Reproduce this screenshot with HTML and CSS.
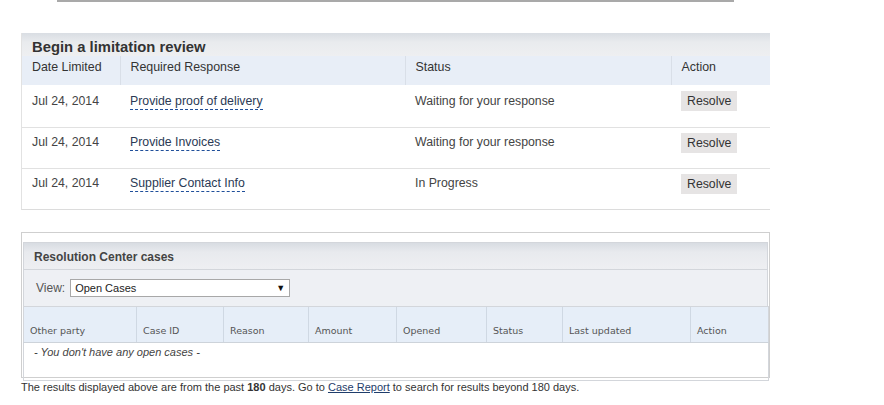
FILE: index.html
```html
<!DOCTYPE html>
<html>
<head>
<meta charset="utf-8">
<link rel="stylesheet" href="styles.css">
</head>
<body>
<div class="page">
  <div class="topline"></div>

  <section class="review">
    <h2 class="review-title">Begin a limitation review</h2>
    <table class="review-table">
      <colgroup>
        <col class="c1"><col class="c2"><col class="c3"><col class="c4">
      </colgroup>
      <thead>
        <tr>
          <th>Date Limited</th>
          <th>Required Response</th>
          <th>Status</th>
          <th>Action</th>
        </tr>
      </thead>
      <tbody>
        <tr>
          <td>Jul 24, 2014</td>
          <td><a class="dlink" href="#">Provide proof of delivery</a></td>
          <td>Waiting for your response</td>
          <td><span class="btn">Resolve</span></td>
        </tr>
        <tr>
          <td>Jul 24, 2014</td>
          <td><a class="dlink" href="#">Provide Invoices</a></td>
          <td>Waiting for your response</td>
          <td><span class="btn">Resolve</span></td>
        </tr>
        <tr>
          <td>Jul 24, 2014</td>
          <td><a class="dlink" href="#">Supplier Contact Info</a></td>
          <td>In Progress</td>
          <td><span class="btn">Resolve</span></td>
        </tr>
      </tbody>
    </table>
  </section>

  <section class="cases">
    <div class="cases-title">Resolution Center cases</div>
    <div class="view-row">
      <span class="view-label">View:</span>
      <div class="select"><span>Open Cases</span><span class="arrow">▼</span></div>
    </div>
    <table class="cases-table">
      <colgroup>
        <col style="width:113px"><col style="width:87px"><col style="width:85px"><col style="width:88px">
        <col style="width:90px"><col style="width:76px"><col style="width:128px"><col style="width:78px">
      </colgroup>
      <thead>
        <tr>
          <th>Other party</th>
          <th>Case ID</th>
          <th>Reason</th>
          <th>Amount</th>
          <th>Opened</th>
          <th>Status</th>
          <th>Last updated</th>
          <th>Action</th>
        </tr>
      </thead>
      <tbody>
        <tr><td colspan="8" class="empty">- You don't have any open cases -</td></tr>
      </tbody>
    </table>
  </section>

  <p class="note">The results displayed above are from the past <b>180</b> days. Go to <a href="#" class="ulink">Case Report</a> to search for results beyond 180 days.</p>
</div>
</body>
</html>
```

FILE: styles.css
```css
html, body {
  margin: 0;
  padding: 0;
  background: #fff;
}
body {
  font-family: "Liberation Sans", Arial, sans-serif;
  color: #333;
  font-size: 12px;
}
.page {
  width: 884px;
  height: 405px;
  overflow: hidden;
  position: relative;
}
.topline {
  margin-left: 57px;
  width: 677px;
  height: 2px;
  background: #a9a9a9;
}

/* review panel */
.review {
  margin: 31px 0 0 21px;
  width: 749px;
  border-left: 1px solid #e2e2e2;
  border-bottom: 1px solid #dcdcdc;
  box-sizing: border-box;
}
.review-title {
  margin: 0;
  height: 23px;
  box-sizing: border-box;
  padding: 6px 0 0 10px;
  font-size: 14.8px;
  line-height: 16px;
  font-weight: bold;
  color: #333;
  background: linear-gradient(#d9dde3 0, #e9ebee 40%, #eeeff1 100%);
}
.review-table {
  width: 748px;
  border-collapse: collapse;
  table-layout: fixed;
}
.review-table .c1 { width: 98px; }
.review-table .c2 { width: 285px; }
.review-table .c3 { width: 266px; }
.review-table .c4 { width: 99px; }
.review-table th {
  background: #e8eef7;
  height: 29px;
  padding: 4px 0 0 10px;
  text-align: left;
  vertical-align: top;
  font-weight: normal;
  font-size: 12.4px;
  line-height: 14px;
  color: #333;
  box-sizing: border-box;
  border-left: 1px solid #d9dfe8;
}
.review-table th:first-child { border-left: none; }
.review-table td {
  height: 41px;
  box-sizing: border-box;
  padding: 7px 0 0 10px;
  vertical-align: top;
  font-size: 12.3px;
  line-height: 14px;
  color: #444;
  border-top: 1px solid #e1e1e1;
}
.review-table td:last-child { padding-top: 5px; }
.review-table tbody tr:first-child td { border-top: none; height: 42px; padding-top: 9px; }
.review-table tbody tr:first-child td:last-child { padding-top: 6px; }
.dlink {
  color: #2b3a55;
  text-decoration: none;
  border-bottom: 1px dashed #1f4f9a;
  padding-bottom: 1px;
}
.btn {
  display: inline-block;
  background: #e6e4e4;
  color: #333;
  height: 20px;
  line-height: 20px;
  padding: 0 6px;
  font-size: 12.3px;
}

/* cases panel */
.cases {
  margin: 22px 0 0 21px;
  width: 749px;
  height: 146px;
  box-sizing: border-box;
  border: 1px solid #cfcfcf;
  padding: 9px 1px 0 1px;
}
.cases-title {
  height: 27px;
  box-sizing: border-box;
  border: 1px solid #d3d6db;
  border-bottom: none;
  padding: 7px 0 0 10px;
  font-size: 12px;
  line-height: 14px;
  font-weight: bold;
  color: #444;
  background: linear-gradient(#d8dce2 0, #e8eaee 35%, #eeeff2 100%);
}
.view-row {
  height: 37px;
  box-sizing: border-box;
  border: 1px solid #d3d6db;
  border-bottom: none;
  background: #eef0f4;
  display: flex;
  align-items: center;
  padding: 0 0 0 12px;
  gap: 5px;
}
.view-label {
  font-size: 12px;
  color: #555;
}
.select {
  width: 220px;
  height: 18px;
  box-sizing: border-box;
  border: 1px solid #a8a8a8;
  background: #fff;
  display: flex;
  justify-content: space-between;
  align-items: center;
  padding: 0 4px 0 4px;
  font-size: 11px;
  color: #222;
}
.select .arrow {
  font-size: 9px;
  color: #111;
}
.cases-table {
  width: 745px;
  border-collapse: collapse;
  table-layout: fixed;
  border: 1px solid #d3d6db;
  border-top: none;
}
.cases-table th {
  height: 36px;
  box-sizing: border-box;
  background: #e6eef8;
  border-left: 1px solid #cfd8e3;
  border-top: 1px solid #d3d6db;
  border-bottom: 1px solid #cdd3da;
  text-align: left;
  vertical-align: bottom;
  padding: 0 0 6px 6px;
  font-family: "DejaVu Sans", Verdana, sans-serif;
  font-size: 9.5px;
  font-weight: normal;
  color: #555;
}
.cases-table th:first-child { border-left: none; }
.cases-table td.empty {
  height: 34px;
  vertical-align: top;
  padding: 3px 0 0 10px;
  font-style: italic;
  font-size: 11px;
  color: #444;
}
.note {
  margin: 3px 0 0 21px;
  font-size: 11px;
  line-height: 13px;
  color: #333;
}
.note b { color: #333; }
.ulink {
  color: #1f3d6b;
  text-decoration: underline;
}
```
